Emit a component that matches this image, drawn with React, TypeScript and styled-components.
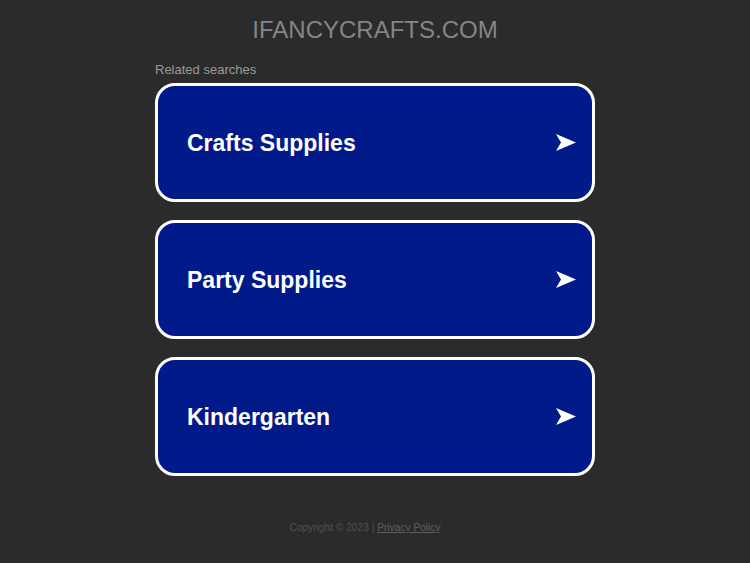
import React from "react";
import styled, { createGlobalStyle } from "styled-components";

interface ISearchLink {
  label: string;
  href: string;
}

const GlobalStyle = createGlobalStyle`
  html, body {
    margin: 0;
    padding: 0;
    background: #2b2b2b;
    font-family: "Liberation Sans", Arial, sans-serif;
  }
`;

const links: ISearchLink[] = [
  { label: "Crafts Supplies", href: "#crafts-supplies" },
  { label: "Party Supplies", href: "#party-supplies" },
  { label: "Kindergarten", href: "#kindergarten" },
];

const Arrow: React.FC = () => (
  <svg width="20" height="17" viewBox="0 0 20 17" aria-hidden>
    <path d="M0 0 L20 8.5 L0 17 L5 8.5 Z" fill="#ffffff" />
  </svg>
);

const App: React.FC = () => {
  return (
    <>
      <GlobalStyle />
      <Page>
        <Domain>IFANCYCRAFTS.COM</Domain>
        <Content>
          <Caption>Related searches</Caption>
          <LinkList>
            {links.map((v) => (
              <SearchLink href={v.href} key={v.href}>
                <span>{v.label}</span>
                <Arrow />
              </SearchLink>
            ))}
          </LinkList>
        </Content>
        <Footer>
          Copyright © 2023 | <a href="#privacy">Privacy Policy</a>
        </Footer>
      </Page>
    </>
  );
};

export default App;

const Page = styled.div`
  display: flex;
  flex-direction: column;
  align-items: center;
  padding-top: 16px;
  min-height: 563px;
  box-sizing: border-box;
`;

const Domain = styled.h1`
  margin: 0;
  font-size: 24px;
  line-height: 28px;
  font-weight: normal;
  color: #858585;
`;

const Content = styled.div`
  width: 440px;
  margin-top: 18px;
`;

const Caption = styled.div`
  font-size: 13px;
  line-height: 16px;
  color: #9a9a9a;
  margin-bottom: 5px;
`;

const LinkList = styled.div`
  display: flex;
  flex-direction: column;
  gap: 18px;
`;

const SearchLink = styled.a`
  display: flex;
  align-items: center;
  justify-content: space-between;
  height: 119px;
  box-sizing: border-box;
  padding: 0 16px 0 29px;
  background: #011a8a;
  border: 3px solid #ffffff;
  border-radius: 20px;
  color: #ffffff;
  font-size: 23px;
  font-weight: bold;
  text-decoration: none;
  span {
    margin-top: 2px;
  }
`;

const Footer = styled.div`
  margin-top: 45px;
  padding-right: 20px;
  font-size: 10.2px;
  line-height: 14px;
  color: #505050;
  a {
    color: #5e5e5e;
    text-decoration: underline;
  }
`;
